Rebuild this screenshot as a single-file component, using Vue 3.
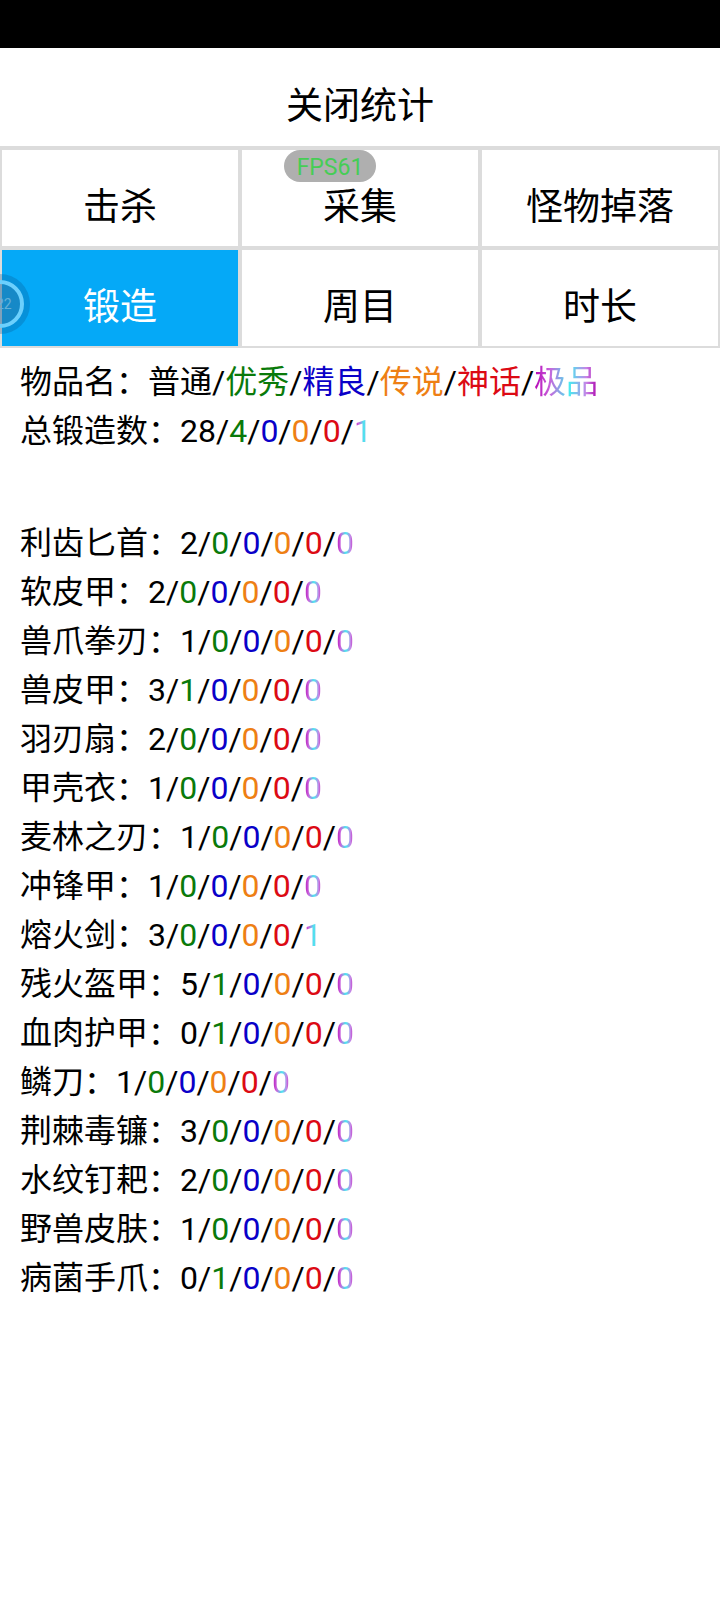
<script setup>
import { ref } from 'vue';

const tabs = ['击杀', '采集', '怪物掉落', '锻造', '周目', '时长'];
const active = ref('锻造');

const grades = ['common', 'fine', 'rare', 'legend', 'myth', 'perfect'];

const summary = [
  { name: '物品名', values: ['普通', '优秀', '精良', '传说', '神话', '极品'] },
  { name: '总锻造数', values: [28, 4, 0, 0, 0, 1] },
];

const items = [
  { name: '利齿匕首', values: [2, 0, 0, 0, 0, 0] },
  { name: '软皮甲', values: [2, 0, 0, 0, 0, 0] },
  { name: '兽爪拳刃', values: [1, 0, 0, 0, 0, 0] },
  { name: '兽皮甲', values: [3, 1, 0, 0, 0, 0] },
  { name: '羽刃扇', values: [2, 0, 0, 0, 0, 0] },
  { name: '甲壳衣', values: [1, 0, 0, 0, 0, 0] },
  { name: '麦林之刃', values: [1, 0, 0, 0, 0, 0] },
  { name: '冲锋甲', values: [1, 0, 0, 0, 0, 0] },
  { name: '熔火剑', values: [3, 0, 0, 0, 0, 1] },
  { name: '残火盔甲', values: [5, 1, 0, 0, 0, 0] },
  { name: '血肉护甲', values: [0, 1, 0, 0, 0, 0] },
  { name: '鳞刀', values: [1, 0, 0, 0, 0, 0] },
  { name: '荆棘毒镰', values: [3, 0, 0, 0, 0, 0] },
  { name: '水纹钉耙', values: [2, 0, 0, 0, 0, 0] },
  { name: '野兽皮肤', values: [1, 0, 0, 0, 0, 0] },
  { name: '病菌手爪', values: [0, 1, 0, 0, 0, 0] },
];

const groups = [summary, items];
</script>

<template>
  <div class="page">
    <div class="status-bar"></div>

    <button class="close">关闭统计</button>

    <div class="tabs">
      <button
        v-for="tab in tabs"
        :key="tab"
        class="tab"
        :class="{ active: tab === active }"
        @click="active = tab"
      >
        {{ tab }}
      </button>
    </div>

    <main class="stats">
      <div v-for="(group, g) in groups" :key="g">
        <div v-for="row in group" :key="row.name" class="row">
          <span>{{ row.name }}：</span>
          <template v-for="(value, i) in row.values" :key="i">
            <span v-if="i > 0">/</span>
            <span :class="grades[i]">{{ value }}</span>
          </template>
        </div>
      </div>
    </main>

    <!-- floating overlays -->
    <div class="fps">FPS61</div>
    <svg class="bubble" width="30" height="60" viewBox="0 0 30 60">
      <circle cx="0" cy="30" r="30" fill="#0a5a96" fill-opacity="0.3" />
      <circle cx="0" cy="30" r="22" fill="#3c78a0" fill-opacity="0.3" />
      <circle cx="0" cy="30" r="22" fill="none" stroke="#6cd0fd" stroke-width="4" />
      <text x="-4" y="35" class="bubble-text">22</text>
    </svg>
  </div>
</template>

<style>
body {
  margin: 0;
  background: #fff;
}
</style>

<style scoped>
.page {
  position: relative;
  color: #000;
  font-family: Roboto, 'Noto Sans CJK SC', sans-serif;
}

.status-bar {
  height: 48px;
  background: #000;
}

.close,
.tab {
  box-sizing: border-box;
  height: 100px;
  padding: 20px 0 0;
  background: #fff;
  color: #000;
  font-family: inherit;
  font-size: 37px;
  line-height: 52px;
  cursor: pointer;
}

.close {
  display: block;
  width: 100%;
  border: none;
  border-bottom: 2px solid #dcdcdc;
}

/* TABS */
.tabs {
  display: grid;
  grid-template-columns: repeat(3, 1fr);
}

.tab {
  border: 2px solid #dcdcdc;
}

.tab.active {
  background: #05a9f7;
  color: #fff;
}

/* STATS */
.stats {
  display: flex;
  flex-direction: column;
  gap: 63px;
  padding: 10px 20px;
  font-size: 32px;
}

.row {
  display: flex;
  height: 49px;
  line-height: 49px;
  white-space: nowrap;
}

.fine {
  color: #0a7a0a;
}

.rare {
  color: #0a00c8;
}

.legend {
  color: #ee7f14;
}

.myth {
  color: #dc0a14;
}

.perfect {
  background: linear-gradient(90deg, #b400b4, #c864dc 25%, #46ebf0 55%, #c882e6 82%, #aa00aa);
  background-clip: text;
  color: transparent;
}

/* OVERLAYS */
.fps {
  position: absolute;
  top: 150px;
  left: 284px;
  box-sizing: border-box;
  width: 92px;
  height: 32px;
  border-radius: 16px;
  background: #afafaf;
  color: #46cd55;
  font-size: 23px;
  line-height: 35px;
  text-align: center;
}

.bubble {
  position: absolute;
  top: 274px;
  left: 0;
}

.bubble-text {
  fill: #62b0d8;
  font-size: 14px;
}
</style>
